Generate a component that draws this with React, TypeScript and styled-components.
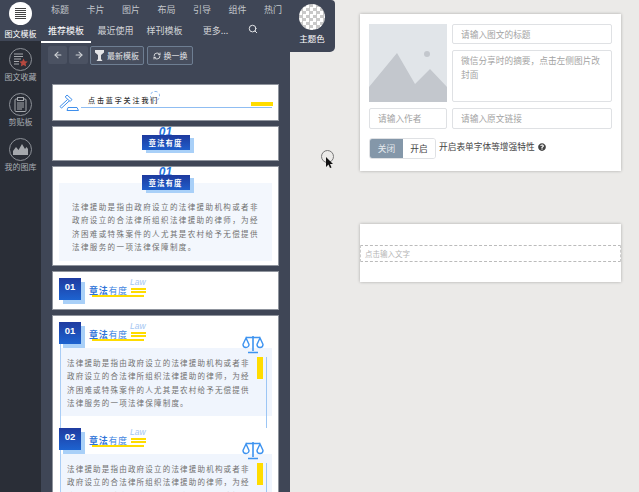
import React from 'react';
import styled, { createGlobalStyle } from 'styled-components';
import { ArrowLeft, ArrowRight, RefreshCw, Search } from 'lucide-react';
import { FaQuestionCircle } from 'react-icons/fa';

const GlobalStyle = createGlobalStyle`
  html, body {
    margin: 0;
    height: 100%;
    overflow: hidden;
    background: #ebeae8;
    font-family: "Noto Sans CJK SC", "Liberation Sans", sans-serif;
  }
  * { box-sizing: border-box; }
`;

const Page = styled.div`
  position: relative;
  display: flex;
  align-items: flex-start;
  width: 639px;
  height: 492px;
  overflow: hidden;
`;

const Rail = styled.nav`
  width: 41px;
  height: 492px;
  flex: none;
  background: #2a2e37;
  display: flex;
  flex-direction: column;
`;

const RailItem = styled.div<{ $active?: boolean }>`
  height: ${(p) => (p.$active ? 41 : 45)}px;
  padding-top: ${(p) => (p.$active ? 2 : 7)}px;
  background: ${(p) => (p.$active ? '#3f4656' : 'transparent')};
  display: flex;
  flex-direction: column;
  align-items: center;
  gap: ${(p) => (p.$active ? 3 : 0)}px;
  color: ${(p) => (p.$active ? '#fff' : '#a9adb4')};
  font-size: 8px;
  line-height: 11px;
  white-space: nowrap;
  flex: none;
`;

const RailCircle = styled.div<{ $active?: boolean }>`
  width: 23px;
  height: 23px;
  flex: none;
  border-radius: 50%;
  background: ${(p) => (p.$active ? '#fff' : 'transparent')};
  border: ${(p) => (p.$active ? 'none' : '1px solid #8d9198')};
  display: flex;
  align-items: center;
  justify-content: center;
`;

const Panel = styled.section`
  width: 249px;
  height: 492px;
  flex: none;
  background: #3f4656;
  display: flex;
  flex-direction: column;
  overflow: hidden;
`;

const TabRow = styled.div`
  display: flex;
  flex: none;
  height: 20px;
  padding: 0 0 0 10px;
  gap: 17.5px;
  align-items: center;
  color: #c3c6cc;
  font-size: 9px;
  line-height: 12px;
`;

const SubTabs = styled.div`
  display: flex;
  flex: none;
  height: 23px;
  align-items: flex-end;
  font-size: 9px;
  line-height: 12px;
  color: #d2d4d8;
`;

const SubTab = styled.div<{ $active?: boolean; $w: number }>`
  width: ${(p) => p.$w}px;
  height: 23px;
  padding-top: 5px;
  text-align: center;
  color: ${(p) => (p.$active ? '#fff' : '#d2d4d8')};
  border-bottom: 2px solid ${(p) => (p.$active ? '#fff' : 'transparent')};
`;

const SearchBox = styled.div`
  margin: 0 0 9px 6px;
  color: #e0e2e5;
  display: flex;
`;

const Toolbar = styled.div`
  display: flex;
  flex: none;
  padding: 3px 0 0 7px;
  height: 41px;
  gap: 2px;
`;

const ArrowBtn = styled.div`
  width: 19px;
  height: 18px;
  background: #4b5262;
  border-radius: 2px;
  color: #cfd2d6;
  display: flex;
  align-items: center;
  justify-content: center;
`;

const OutlineBtn = styled.div<{ $w: number }>`
  width: ${(p) => p.$w}px;
  height: 19px;
  border: 1px solid #6e7e92;
  border-radius: 2px;
  background: #474e5e;
  color: #e3e4e7;
  font-size: 8px;
  line-height: 11px;
  display: flex;
  align-items: center;
  justify-content: center;
  gap: 3px;
  white-space: nowrap;
  & + & {
    margin-left: 1px;
  }
`;

const CardList = styled.div`
  display: flex;
  flex-direction: column;
  flex: none;
  gap: 5px;
  margin-left: 11px;
  width: 227px;
`;

const Card = styled.div<{ $h: number }>`
  position: relative;
  height: ${(p) => p.$h}px;
  background: #fff;
  border: 1px solid #8f949d;
  overflow: hidden;
  flex: none;
`;

const FollowRow = styled.div`
  display: flex;
  align-items: flex-start;
  padding: 9px 0 0 6px;
  height: 35px;
`;

const FollowText = styled.div`
  margin: 1px 0 0 8px;
  font-size: 7px;
  line-height: 10px;
  letter-spacing: 1.9px;
  font-weight: 500;
  color: #333;
  white-space: nowrap;
`;

const DashedDot = styled.span`
  position: absolute;
  left: 97px;
  top: 6px;
  width: 10px;
  height: 10px;
  border-radius: 50%;
  border: 1px dashed #86b6ee;
`;

const FollowLine = styled.span`
  position: absolute;
  left: 28px;
  top: 22px;
  width: 191px;
  height: 1px;
  background: #8fbdf2;
`;

const FollowMark = styled.span`
  position: absolute;
  left: 198px;
  top: 17px;
  width: 22px;
  height: 4px;
  background: #ffdc00;
`;

const BannerWrap = styled.div`
  position: relative;
  z-index: 1;
  display: flex;
  flex-direction: column;
  align-items: center;
  height: 26px;
`;

const BannerNumber = styled.div`
  height: 8px;
  font: italic 700 12px/10px "Liberation Sans", sans-serif;
  color: #2472dc;
`;

const Banner = styled.div`
  width: 48px;
  height: 15px;
  background: linear-gradient(180deg, #1d3a9e, #1f5ecb);
  color: #fff;
  font-size: 7.5px;
  font-weight: 700;
  line-height: 15px;
  letter-spacing: 1px;
  text-align: center;
  box-shadow: 4px 3px 0 #a9d0f8;
`;

const Intro = styled.div`
  margin: -10px 6px 0;
  height: 78px;
  background: #f3f7fd;
  padding: 17px 0 0 13px;
`;

const BodyText = styled.p<{ $wide?: boolean }>`
  margin: 0;
  width: ${(p) => (p.$wide ? 190 : 186)}px;
  font-size: 7.5px;
  line-height: 13.3px;
  letter-spacing: ${(p) => (p.$wide ? 1.4 : 1.2)}px;
  color: #707070;
`;

const SectionHead = styled.div`
  display: flex;
  height: 26px;
  align-items: flex-start;
`;

const Badge = styled.div`
  width: 22px;
  height: 22px;
  flex: none;
  background: linear-gradient(180deg, #1f3ba0, #1d63d0);
  color: #fff;
  font: 700 9.5px/18px "Liberation Sans", sans-serif;
  text-align: center;
  box-shadow: 4px 4px 0 #a9d0f8;
`;

const HeadTitle = styled.div`
  position: relative;
  width: 60px;
  margin-left: 8px;
  padding-top: 7px;
  font-size: 9px;
  line-height: 12px;
  letter-spacing: 0.7px;
  color: #3f86df;
  white-space: nowrap;
  b { font-weight: 700; color: #2f74d8; }
`;

const Law = styled.span`
  position: absolute;
  left: 41px;
  top: 0;
  width: 16px;
  font: italic 8.5px/9px "Liberation Sans", sans-serif;
  letter-spacing: 0;
  color: #a3c6f2;
`;

const LawBars = styled.span`
  position: absolute;
  left: 42px;
  top: 10px;
  width: 15px;
  height: 5px;
  border-top: 2px solid #ffdc00;
  border-bottom: 2px solid #ffdc00;
`;

const HeadUnderline = styled.span`
  position: absolute;
  left: 3px;
  top: 17px;
  width: 52px;
  height: 2px;
  background: #ffdc00;
`;

const LawCard = styled.div`
  padding: 6px 0 0 6px;
`;

const LawBlock = styled.div`
  position: relative;
  width: 213px;
  height: 106px;
  flex: none;
`;

const LawBody = styled.div`
  margin-left: 1px;
  height: 68px;
  background: #f0f5fd;
  padding: 8px 0 0 7px;
`;

const LeftLine = styled.span`
  position: absolute;
  left: 1px;
  top: 22px;
  width: 1px;
  height: 84px;
  background: #a9cdf6;
`;

const RightLine = styled.span`
  position: absolute;
  left: 207px;
  top: 35px;
  width: 1px;
  height: 71px;
  background: #9cc6f5;
`;

const YellowTab = styled.span`
  position: absolute;
  left: 198px;
  top: 35px;
  width: 6px;
  height: 22px;
  background: #ffdc00;
`;

const ScaleSpot = styled.span`
  position: absolute;
  left: 183px;
  top: 13px;
  line-height: 0;
`;

const ThemeTab = styled.div`
  width: 45px;
  height: 52px;
  flex: none;
  background: #3f4656;
  border-radius: 0 4px 5px 0;
  display: flex;
  flex-direction: column;
  align-items: center;
  padding: 4px 1px 0 0;
  gap: 2px;
  color: #fff;
  font-size: 8.5px;
  line-height: 12px;
`;

const Swatch = styled.div`
  width: 26px;
  height: 26px;
  border-radius: 50%;
  background: repeating-conic-gradient(#c9c9c9 0 25%, #fff 0 50%) 0 0 / 7px 7px;
`;

const Workspace = styled.main`
  flex: 1;
  padding: 14px 0 0 25px;
  display: flex;
  flex-direction: column;
  gap: 53px;
`;

const Sheet = styled.div`
  width: 261px;
  background: #fff;
  box-shadow: 0 0 3px rgba(0, 0, 0, 0.28);
`;

const FormSheet = styled(Sheet)`
  height: 157px;
  padding: 10px 9px;
  display: grid;
  grid-template-columns: 78px 160px;
  grid-template-rows: 20px 52px 21px 21px;
  column-gap: 5px;
  row-gap: 6px;
`;

const Thumb = styled.div`
  grid-row: 1 / span 2;
  line-height: 0;
`;

const Field = styled.div<{ $tall?: boolean }>`
  border: 1px solid #dfe1e4;
  border-radius: 2px;
  padding: ${(p) => (p.$tall ? '3px 8px' : '0 8px')};
  font-size: 8.7px;
  line-height: ${(p) => (p.$tall ? '14px' : '19px')};
  color: #a3a3a3;
`;

const OptionRow = styled.div`
  grid-column: 1 / span 2;
  margin-top: 3px;
  display: flex;
  align-items: flex-start;
  font-size: 8.7px;
  line-height: 12px;
  color: #333;
`;

const Toggle = styled.div`
  width: 67px;
  height: 21px;
  flex: none;
  border: 1px solid #dfe1e4;
  border-radius: 3px;
  display: flex;
  overflow: hidden;
  margin-right: 3px;
`;

const ToggleOption = styled.div<{ $on?: boolean }>`
  flex: ${(p) => (p.$on ? '0 0 33px' : '1')};
  text-align: center;
  line-height: 19px;
  background: ${(p) => (p.$on ? '#8497a9' : '#fff')};
  color: ${(p) => (p.$on ? '#e6eaee' : '#444')};
`;

const OptionLabel = styled.div`
  display: flex;
  align-items: center;
  gap: 3px;
  padding-top: 3px;
  color: #444;
`;

const EditorSheet = styled(Sheet)`
  height: 58px;
  padding-top: 21px;
`;

const EditorLine = styled.div`
  height: 17px;
  border-top: 1px dashed #bbb;
  border-bottom: 1px dashed #bbb;
  border-left: 1px dashed #ccc;
  border-right: 1px dashed #ccc;
  padding-left: 4px;
  font-size: 7.5px;
  line-height: 15px;
  color: #b5b5b5;
`;

const CursorRing = styled.div`
  position: absolute;
  left: 321px;
  top: 150px;
  width: 13px;
  height: 13px;
  border-radius: 50%;
  border: 1px solid #777;
`;

const CursorArrow = styled.svg`
  position: absolute;
  left: 326px;
  top: 157px;
`;

const TOP_TABS = ['标题', '卡片', '图片', '布局', '引导', '组件', '热门'];
const LAW_TEXT =
  '法律援助是指由政府设立的法律援助机构或者非政府设立的合法律所组织法律援助的律师，为经济困难或特殊案件的人尤其是农村给予无偿提供法律服务的一项法律保障制度。';

function ListIcon() {
  return (
    <svg width="13" height="13" viewBox="0 0 13 13" stroke="#444" strokeWidth="1">
      <path d="M1 1.500h11M1 3.500h11M1 5.500h11M1 7.500h11M1 9.500h11M1 11.500h11" />
    </svg>
  );
}

function StarDocIcon() {
  return (
    <svg width="15" height="15" viewBox="0 0 15 15" fill="none">
      <path d="M1 2h9M1 4.500h9M1 7h7M1 9.500h5M1 12h5" stroke="#a5a8ad" strokeWidth="1.2" />
      <path d="M10.500 6.500l1.300 2.700 3 .4-2.200 2 .6 3-2.700-1.500-2.700 1.500.6-3-2.200-2 3-.4z" fill="#b5483f" />
    </svg>
  );
}

function ClipIcon() {
  return (
    <svg width="13" height="15" viewBox="0 0 13 15" fill="none" stroke="#a5a8ad">
      <rect x="1" y="2" width="11" height="12.5" rx="1" />
      <rect x="3.5" y="0.5" width="6" height="3" fill="#2a2e37" />
      <path d="M3 6h7M3 8h7M3 10h7M3 12h5" />
    </svg>
  );
}

function PictureIcon() {
  return (
    <svg width="15" height="13" viewBox="0 0 15 13" fill="#a5a8ad">
      <path d="M0 12V8l3-4 2.500 3L9 1l3 5 1.500-2L15 6v6z" />
    </svg>
  );
}

function FilterIcon() {
  return (
    <svg width="9" height="11" viewBox="0 0 9 11" fill="#e3e4e7">
      <path d="M0 0h9v2.500L6 5v4l1.500 2h-6L3 9V5L0 2.500z" />
    </svg>
  );
}

function GavelIcon() {
  return (
    <svg width="21" height="17" viewBox="0 0 21 17" fill="none" stroke="#3f8fec" strokeWidth="1">
      <path d="M8 1l5 4.500-1.800 2-5-4.500zM8.500 5.500L1 12.500l1.500 1.600 7.600-7" />
      <path d="M9 13.500h9l1.500 3H8z" />
    </svg>
  );
}

function ScaleIcon() {
  return (
    <svg width="22" height="19" viewBox="0 0 22 19" fill="none" stroke="#3f94f0" strokeWidth="1.4">
      <path d="M4 2.500h14M11 1v15M6 17.500h10" strokeWidth="1.6" />
      <path d="M4 3L1 9.500a3 3 0 0 0 6 0zM18 3l-3 6.500a3 3 0 0 0 6 0z" />
    </svg>
  );
}

function SectionTitle({ no }: { no: string }) {
  return (
    <SectionHead>
      <Badge>{no}</Badge>
      <HeadTitle>
        <b>章法</b>有度
        <Law>Law</Law>
        <LawBars />
        <HeadUnderline />
      </HeadTitle>
    </SectionHead>
  );
}

function LawSection({ no }: { no: string }) {
  return (
    <LawBlock>
      <SectionTitle no={no} />
      <LawBody>
        <BodyText>{LAW_TEXT}</BodyText>
      </LawBody>
      <LeftLine />
      <RightLine />
      <YellowTab />
      <ScaleSpot>
        <ScaleIcon />
      </ScaleSpot>
    </LawBlock>
  );
}

export default function App() {
  return (
    <Page>
      <GlobalStyle />
      <Rail>
        <RailItem $active>
          <RailCircle $active>
            <ListIcon />
          </RailCircle>
          图文模板
        </RailItem>
        <RailItem>
          <RailCircle>
            <StarDocIcon />
          </RailCircle>
          图文收藏
        </RailItem>
        <RailItem>
          <RailCircle>
            <ClipIcon />
          </RailCircle>
          剪贴板
        </RailItem>
        <RailItem>
          <RailCircle>
            <PictureIcon />
          </RailCircle>
          我的图库
        </RailItem>
      </Rail>

      <Panel>
        <TabRow>
          {TOP_TABS.map((t) => (
            <span key={t}>{t}</span>
          ))}
        </TabRow>
        <SubTabs>
          <SubTab $active $w={50}>
            推荐模板
          </SubTab>
          <SubTab $w={49}>最近使用</SubTab>
          <SubTab $w={49}>样刊模板</SubTab>
          <SubTab $w={53}>更多...</SubTab>
          <SearchBox>
            <Search size={10} strokeWidth={2.4} />
          </SearchBox>
        </SubTabs>
        <Toolbar>
          <ArrowBtn>
            <ArrowLeft size={10} strokeWidth={2.6} />
          </ArrowBtn>
          <ArrowBtn>
            <ArrowRight size={10} strokeWidth={2.6} />
          </ArrowBtn>
          <OutlineBtn $w={54}>
            <FilterIcon />
            最新模板
          </OutlineBtn>
          <OutlineBtn $w={46}>
            <RefreshCw size={8} strokeWidth={2.6} />
            换一换
          </OutlineBtn>
        </Toolbar>
        <CardList>
          <Card $h={37}>
            <FollowRow>
              <GavelIcon />
              <FollowText>点击蓝字关注我们</FollowText>
            </FollowRow>
            <DashedDot />
            <FollowLine />
            <FollowMark />
          </Card>
          <Card $h={35}>
            <BannerWrap>
              <BannerNumber>01</BannerNumber>
              <Banner>章法有度</Banner>
            </BannerWrap>
          </Card>
          <Card $h={100}>
            <BannerWrap>
              <BannerNumber>01</BannerNumber>
              <Banner>章法有度</Banner>
            </BannerWrap>
            <Intro>
              <BodyText $wide>{LAW_TEXT}</BodyText>
            </Intro>
          </Card>
          <Card $h={39}>
            <LawCard>
              <SectionTitle no="01" />
            </LawCard>
          </Card>
          <Card $h={190}>
            <LawCard>
              <LawSection no="01" />
              <LawSection no="02" />
            </LawCard>
          </Card>
        </CardList>
      </Panel>

      <ThemeTab>
        <Swatch />
        主题色
      </ThemeTab>

      <Workspace>
        <FormSheet>
          <Thumb>
            <svg width="78" height="78" viewBox="0 0 78 78">
              <rect width="78" height="78" fill="#e1e5e9" />
              <circle cx="58" cy="30" r="3" fill="#c3c7cd" />
              <path d="M0 63L28 29 46 60 61 45 78 63V78H0z" fill="#c3c7cd" />
            </svg>
          </Thumb>
          <Field>请输入图文的标题</Field>
          <Field $tall>微信分享时的摘要，点击左侧图片改封面</Field>
          <Field>请输入作者</Field>
          <Field>请输入原文链接</Field>
          <OptionRow>
            <Toggle>
              <ToggleOption $on>关闭</ToggleOption>
              <ToggleOption>开启</ToggleOption>
            </Toggle>
            <OptionLabel>
              开启表单字体等增强特性
              <FaQuestionCircle size={8} color="#444" />
            </OptionLabel>
          </OptionRow>
        </FormSheet>
        <EditorSheet>
          <EditorLine>点击输入文字</EditorLine>
        </EditorSheet>
      </Workspace>

      <CursorRing />
      <CursorArrow width="8" height="11" viewBox="0 0 8 11">
        <path d="M0 0l7 7H4l1.500 3.500-1.500.5L2.500 7.500 0 10z" fill="#111" />
      </CursorArrow>
    </Page>
  );
}
